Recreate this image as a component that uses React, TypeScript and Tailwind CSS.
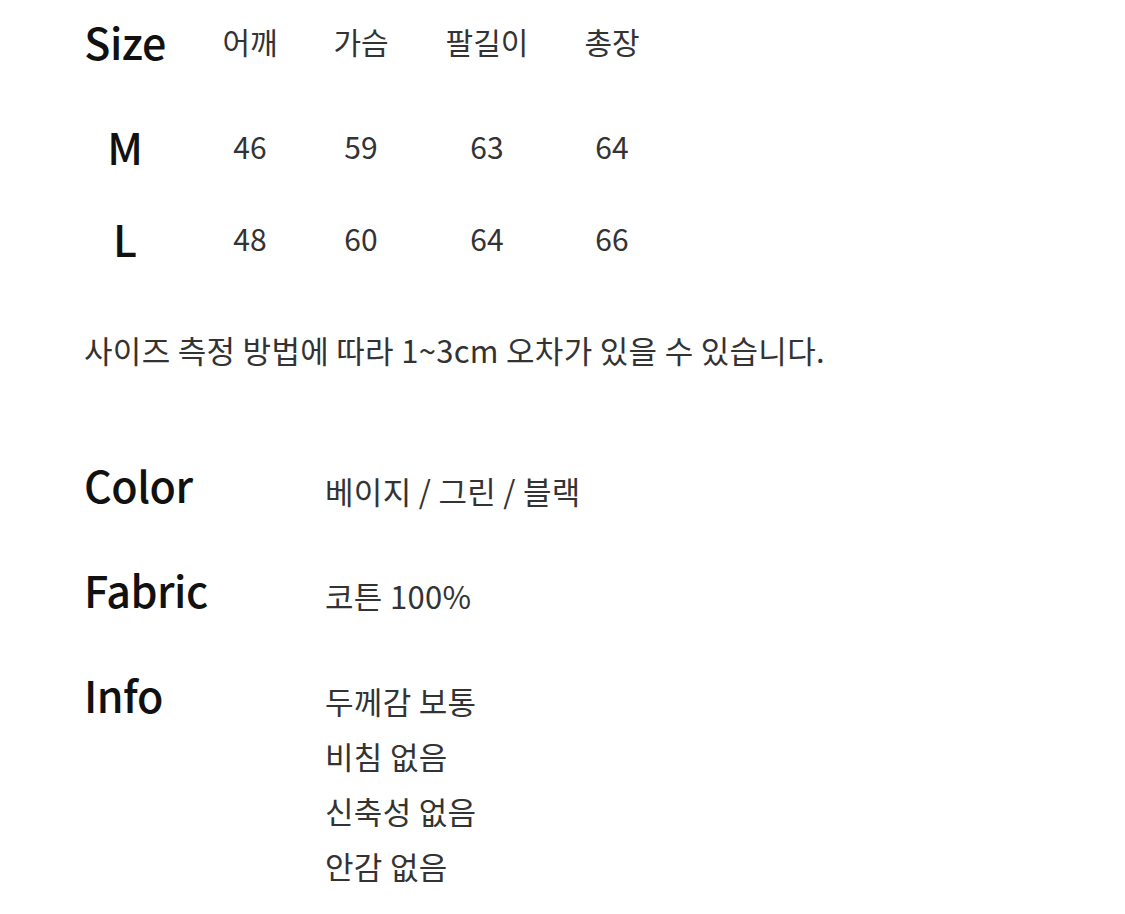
import React from 'react';

const sizeHeaders = ['어깨', '가슴', '팔길이', '총장'];

const sizeRows = [
  { size: 'M', values: ['46', '59', '63', '64'] },
  { size: 'L', values: ['48', '60', '64', '66'] },
];

const details = [
  { label: 'Color', lines: ['베이지 / 그린 / 블랙'] },
  { label: 'Fabric', lines: ['코튼 100%'] },
  { label: 'Info', lines: ['두께감 보통', '비침 없음', '신축성 없음', '안감 없음'] },
];

const App: React.FC = () => {
  return (
    <div
      className="min-h-screen w-[1125px] bg-white pl-[84px] text-[#333]"
      style={{ fontFamily: '"Noto Sans CJK KR", "Noto Sans", sans-serif' }}
    >
      {/* Size table */}
      <div className="grid grid-cols-[111px_110px_112px_140px_110px] grid-rows-[82px_128px_56px] items-center">
        <div className="w-[82px] text-center text-[43px] font-medium leading-none tracking-[-0.5px] text-[#111]">
          Size
        </div>
        {sizeHeaders.map((h) => (
          <div key={h} className="text-center text-[30px] leading-none">
            {h}
          </div>
        ))}
        {sizeRows.map((row) => (
          <React.Fragment key={row.size}>
            <div className="w-[82px] text-center text-[43px] font-medium leading-none text-[#111]">
              {row.size}
            </div>
            {row.values.map((v, i) => (
              <div key={i} className="text-center text-[30px] leading-none">
                {v}
              </div>
            ))}
          </React.Fragment>
        ))}
      </div>

      <p className="mt-[68px] text-[31px] leading-[31px] tracking-[0.3px]">
        사이즈 측정 방법에 따라 1~3cm 오차가 있을 수 있습니다.
      </p>

      {/* Details */}
      <div className="mt-[97px] flex flex-col gap-[61px]">
        {details.map((d) => (
          <div key={d.label} className="flex">
            <div className="w-[241px] text-[43px] font-medium leading-[44px] tracking-[-0.5px] text-[#111]">
              {d.label}
            </div>
            <div className="flex flex-col gap-[24px] pt-[13px]">
              {d.lines.map((line) => (
                <div key={line} className="text-[31px] leading-[31px] tracking-[0.3px]">
                  {line}
                </div>
              ))}
            </div>
          </div>
        ))}
      </div>
    </div>
  );
};

export default App;
